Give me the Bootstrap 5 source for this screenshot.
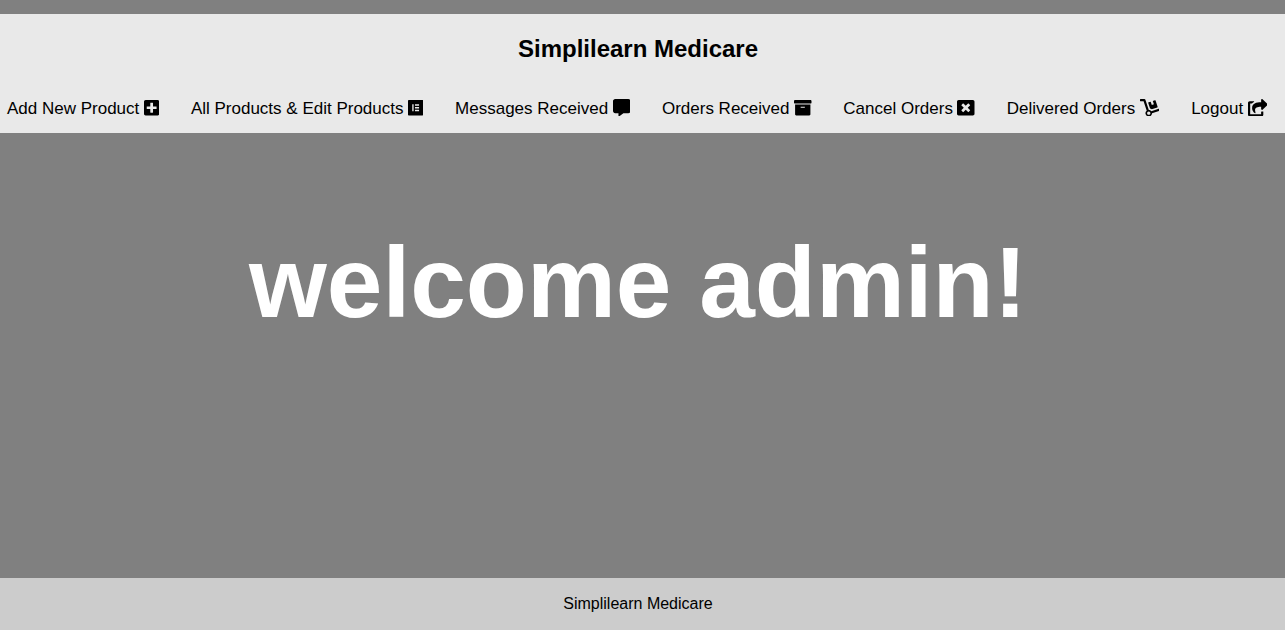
<!DOCTYPE html>
<html lang="en">
<head>
<meta charset="utf-8">
<meta name="viewport" content="width=device-width, initial-scale=1">
<title>Simplilearn Medicare</title>
<link href="https://cdn.jsdelivr.net/npm/bootstrap@5.3.0/dist/css/bootstrap.min.css" rel="stylesheet">
<style>
body{font-family:"Liberation Sans",Arial,sans-serif;background:#808080;color:#000;line-height:normal}
.site-header{background:#e9e9e9;margin-top:14px;height:119px;padding-top:21px}
.site-title{font-size:24px;font-weight:700;line-height:28px;padding-right:9px}
.menu{margin-top:23px;padding-left:7px;gap:31.7px}
.menu a{font-size:17px;line-height:45px;height:45px;color:#000;text-decoration:none;white-space:nowrap;display:flex;align-items:center}
.menu svg{height:17.5px;margin:0 0 2.5px 4.6px;fill:currentColor}
.hero{font-size:100px;font-weight:700;line-height:114px;color:#fff;padding:92px 9px 0 0}
.site-footer{background:#ccc;height:52px;font-size:16px;padding-right:9px}
</style>
<script src="https://cdn.jsdelivr.net/npm/bootstrap@5.3.0/dist/js/bootstrap.bundle.min.js"></script>
</head>
<body class="d-flex flex-column vh-100 overflow-hidden">
<header class="site-header flex-shrink-0">
<h1 class="site-title text-center mb-0">Simplilearn Medicare</h1>
<nav class="menu d-flex">
<a href="#">Add New Product <svg viewBox="0 0 448 512"><path d="M400 32H48C21.500 32 0 53.500 0 80v352c0 26.500 21.500 48 48 48h352c26.500 0 48-21.500 48-48V80c0-26.500-21.500-48-48-48zm-32 252c0 6.600-5.400 12-12 12h-92v92c0 6.600-5.400 12-12 12h-56c-6.600 0-12-5.400-12-12v-92H92c-6.600 0-12-5.400-12-12v-56c0-6.600 5.400-12 12-12h92v-92c0-6.600 5.400-12 12-12h56c6.600 0 12 5.400 12 12v92h92c6.600 0 12 5.400 12 12v56z"/></svg></a>
<a href="#">All Products &amp; Edit Products <svg viewBox="0 0 448 512"><path d="M425.600 32H22.400C10 32 0 42 0 54.400v403.200C0 470 10 480 22.400 480h403.200c12.400 0 22.400-10 22.400-22.400V54.400C448 42 438 32 425.600 32M164.300 355.500h-39.800v-199h39.800v199zm159.300 0H204.100v-39.800h119.500v39.800zm0-79.600H204.100v-39.800h119.500v39.800zm0-79.700H204.100v-39.800h119.500v39.800z"/></svg></a>
<a href="#">Messages Received <svg viewBox="0 0 512 512"><path d="M448 0H64C28.700 0 0 28.700 0 64v288c0 35.300 28.700 64 64 64h96v84c0 9.800 11.200 15.500 19.100 9.700L304 416h144c35.300 0 64-28.700 64-64V64c0-35.300-28.700-64-64-64z"/></svg></a>
<a href="#">Orders Received <svg viewBox="0 0 512 512"><path d="M32 448c0 17.700 14.300 32 32 32h384c17.700 0 32-14.300 32-32V160H32v288zm160-212c0-6.600 5.400-12 12-12h104c6.600 0 12 5.400 12 12v8c0 6.600-5.400 12-12 12H204c-6.600 0-12-5.400-12-12v-8zM480 32H32C14.300 32 0 46.300 0 64v48c0 8.800 7.200 16 16 16h480c8.800 0 16-7.200 16-16V64c0-17.700-14.300-32-32-32z"/></svg></a>
<a href="#">Cancel Orders <svg viewBox="0 0 512 512"><path d="M464 32H48C21.500 32 0 53.500 0 80v352c0 26.500 21.500 48 48 48h416c26.500 0 48-21.500 48-48V80c0-26.500-21.500-48-48-48zm-83.600 290.500c4.800 4.800 4.800 12.600 0 17.400l-40.500 40.500c-4.800 4.800-12.600 4.800-17.400 0L256 313.300l-66.500 67.100c-4.800 4.800-12.600 4.800-17.400 0l-40.500-40.500c-4.800-4.800-4.800-12.600 0-17.400l67.100-66.500-67.100-66.500c-4.800-4.800-4.800-12.600 0-17.400l40.500-40.500c4.800-4.800 12.600-4.800 17.400 0l66.500 67.100 66.500-67.100c4.800-4.800 12.600-4.800 17.400 0l40.500 40.500c4.800 4.800 4.800 12.600 0 17.400L313.300 256l67.100 66.500z"/></svg></a>
<a href="#">Delivered Orders <svg viewBox="0 0 576 512"><path d="M294.200 277.700c18 5 34.700 13.400 49.500 24.700l161.500-53.800c8.400-2.800 12.900-11.900 10.100-20.200L454.900 47.200c-2.800-8.400-11.900-12.900-20.200-10.100l-61.100 20.400 33.100 99.400L346 177l-33.100-99.400-61.600 20.500c-8.400 2.800-12.900 11.900-10.100 20.200l53 159.400zm281 48.700L565 296c-2.800-8.400-11.900-12.900-20.200-10.100l-213.500 71.200c-17.200-22-43.600-36.400-73.500-37L158.400 21.900C154 8.800 141.800 0 128 0H16C7.200 0 0 7.200 0 16v32c0 8.800 7.200 16 16 16h88.900l92.200 276.700c-26.100 20.400-41.700 53.600-36 90.500 6.100 39.400 37.900 72.300 77.300 79.200 60.200 10.700 112.300-34.800 113.400-92.600l213.300-71.200c8.300-2.800 12.900-11.800 10.100-20.200zM256 464c-26.500 0-48-21.500-48-48s21.500-48 48-48 48 21.500 48 48-21.500 48-48 48z"/></svg></a>
<a href="#">Logout <svg viewBox="0 0 576 512"><path d="M568.500 177.400L424.500 313c-15.100 14.300-40.500 3.700-40.500-17.500v-72c-144.600 1-205.600 35.100-164.800 171.400 4.500 15.100-12.800 26.600-25 17.300C155.300 383.100 120 326.500 120 269.300c0-143.900 117.600-172.500 264-173.300V24c0-21.200 25.300-31.800 40.500-17.400l144 135.400c10 9.500 10 25.400 0 35.400zM384 379.100V448H64V128h50.900c3.200 0 6.300-1.300 8.500-3.600 15-15.500 32.800-27.700 52-37C186.300 82.100 182.600 64 169.800 64H48C21.500 64 0 85.500 0 112v352c0 26.500 21.500 48 48 48h352c26.500 0 48-21.500 48-48v-88.800c0-8.200-7.900-14-15.700-11.300-11.200 3.900-23.600 4-35 .6-6.700-2-13.300 5.600-13.300 14.600z"/></svg></a>
</nav>
</header>
<main class="hero text-center flex-grow-1">welcome admin!</main>
<footer class="site-footer d-flex align-items-center justify-content-center flex-shrink-0">Simplilearn Medicare</footer>
</body>
</html>
